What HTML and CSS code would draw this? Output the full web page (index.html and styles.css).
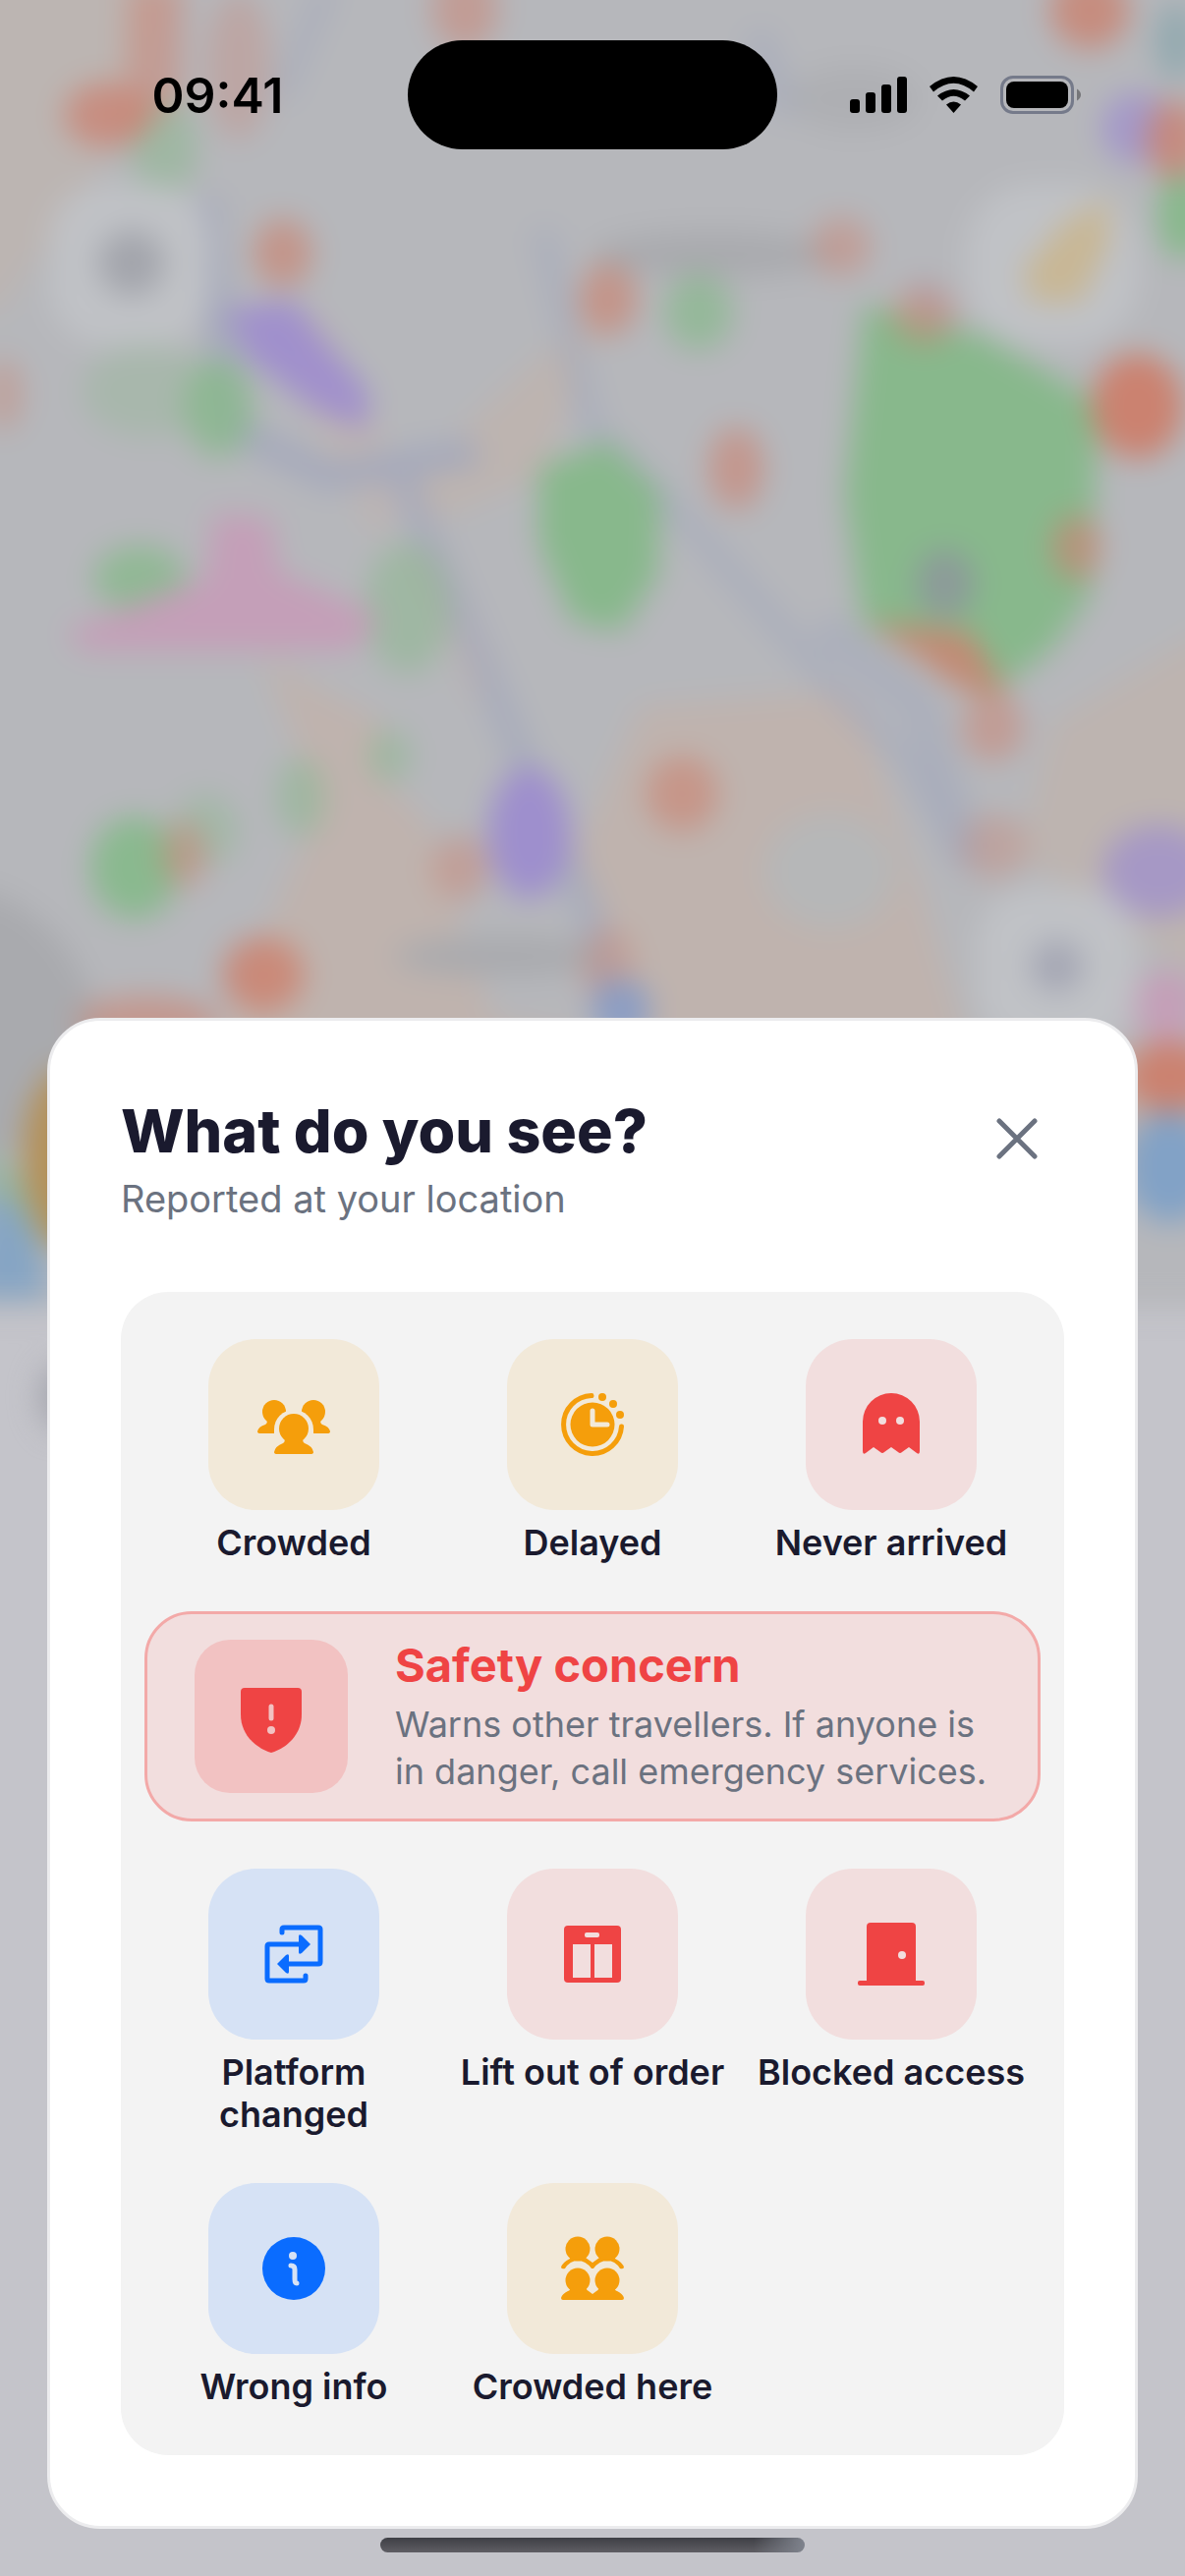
FILE: index.html
```html
<!DOCTYPE html>
<html lang="en">
<head>
  <meta charset="UTF-8">
  <meta name="viewport" content="width=device-width, initial-scale=1">
  <title>What do you see?</title>
  <link rel="stylesheet" href="styles.css">
</head>
<body>
  <!-- Blurred map behind the sheet -->
  <svg class="map" viewBox="0 0 721 1568" preserveAspectRatio="xMidYMin slice" aria-hidden="true">
    <defs>
      <filter id="soft" x="-10%" y="-10%" width="120%" height="120%" color-interpolation-filters="sRGB">
        <feGaussianBlur stdDeviation="9"/>
      </filter>
    </defs>
    <rect width="721" height="1568" fill="#c4c4ca"/>
    <g filter="url(#soft)">
      <rect x="-40" y="-40" width="801" height="836" fill="#b6b7bb"/>

      <!-- Built-up areas -->
      <g fill="#bfb3ae">
        <path d="M-20-20H110L70 90L0 190H-20Z" opacity=".7"/>
        <path d="M250 290L370 180L330 290L255 320Z" opacity=".8"/>
        <path d="M190 180L250 300L230 330L180 240Z" opacity=".6"/>
        <path d="M260 500L300 620L410 640H760V720H60L130 640L190 500L180 430L230 470Z"/>
        <path d="M390 430L520 420L560 540L590 640H400L350 520Z"/>
        <path d="M640 440L740 380V600L620 520Z" opacity=".8"/>
        <path d="M265 320L300 400L290 430L250 340Z"/>
        <path d="M160 400L235 440L215 530L190 480Z"/>
      </g>
      <ellipse cx="505" cy="530" rx="40" ry="35" fill="#b6b7b8"/>
      <path d="M-20 540Q40 550 60 620V700H-20Z" fill="#a9aaae"/>

      <!-- Water and rail lines -->
      <g fill="none" stroke="#a5a9bb" stroke-width="17">
        <path d="M125 120L140 260L200 290L290 275"/>
        <path d="M240 280L300 420L360 560L380 640" opacity=".8"/>
        <path d="M330 140L360 260L420 320L500 410L550 460L590 530" stroke-width="14" opacity=".7"/>
        <path d="M500 380L560 430L590 520" stroke-width="20" opacity=".7"/>
        <path d="M560 170L600 260" stroke-width="10"/>
        <path d="M200-10L170 60" stroke-width="12" opacity=".7"/>
        <path d="M460 20L480 70" stroke-width="16" opacity=".7"/>
      </g>
      <g fill="#a9aaae">
        <ellipse cx="435" cy="155" rx="75" ry="14"/>
        <ellipse cx="520" cy="60" rx="40" ry="20" opacity=".6"/>
        <ellipse cx="305" cy="582" rx="65" ry="12"/>
      </g>

      <!-- Parks -->
      <g fill="#88b88c">
        <path d="M526 185L600 205L668 245L664 360L640 395L600 425L525 380L514 300Z"/>
        <path d="M328 285L370 268L402 300L400 350L378 384L348 378L328 330Z"/>
        <ellipse cx="85" cy="352" rx="28" ry="20" opacity=".8"/>
        <ellipse cx="133" cy="248" rx="21" ry="30" opacity=".8"/>
        <ellipse cx="90" cy="238" rx="40" ry="28" opacity=".3"/>
        <ellipse cx="425" cy="190" rx="21" ry="23" opacity=".7"/>
        <ellipse cx="248" cy="370" rx="26" ry="40" opacity=".5"/>
        <ellipse cx="82" cy="528" rx="27" ry="31" opacity=".95"/>
        <ellipse cx="125" cy="505" rx="20" ry="22" opacity=".4"/>
        <ellipse cx="183" cy="485" rx="15" ry="24" opacity=".5"/>
        <ellipse cx="237" cy="460" rx="13" ry="16" opacity=".5"/>
        <ellipse cx="100" cy="90" rx="20" ry="30" opacity=".5"/>
        <ellipse cx="720" cy="130" rx="16" ry="28"/>
      </g>
      <ellipse cx="575" cy="355" rx="18" ry="21" fill="#8c9b99"/>

      <!-- Pink and purple districts -->
      <path d="M40 384L125 352L130 312L165 315L170 348L232 375L215 396H50Z" fill="#c49fb8"/>
      <g fill="#9d8cce">
        <path d="M138 188L178 182L225 240L222 262L190 248L150 218Z" opacity=".9"/>
        <ellipse cx="322" cy="507" rx="25" ry="40" opacity=".95"/>
        <ellipse cx="705" cy="530" rx="34" ry="28" opacity=".7"/>
        <ellipse cx="692" cy="78" rx="22" ry="22" opacity=".7"/>
      </g>

      <!-- Stations -->
      <g fill="#cb8270">
        <ellipse cx="65" cy="70" rx="26" ry="20" opacity=".75"/>
        <path d="M78-10L112-10L110 60L75 90Z" opacity=".5"/>
        <ellipse cx="145" cy="40" rx="20" ry="45" opacity=".3"/>
        <ellipse cx="283" cy="5" rx="20" ry="26" opacity=".5"/>
        <ellipse cx="663" cy="6" rx="24" ry="24" opacity=".8"/>
        <ellipse cx="715" cy="85" rx="18" ry="24" opacity=".8"/>
        <ellipse cx="172" cy="154" rx="18" ry="21" opacity=".65"/>
        <ellipse cx="370" cy="182" rx="18" ry="22" opacity=".65"/>
        <ellipse cx="512" cy="150" rx="18" ry="18" opacity=".45"/>
        <ellipse cx="562" cy="192" rx="19" ry="18" opacity=".5"/>
        <ellipse cx="448" cy="285" rx="17" ry="25" opacity=".6"/>
        <ellipse cx="692" cy="247" rx="28" ry="32"/>
        <ellipse cx="655" cy="333" rx="15" ry="20" opacity=".65"/>
        <path d="M528 378L590 384L614 425L585 420Z" opacity=".85"/>
        <ellipse cx="604" cy="443" rx="19" ry="20" opacity=".5"/>
        <ellipse cx="415" cy="483" rx="22" ry="23" opacity=".6"/>
        <ellipse cx="605" cy="515" rx="20" ry="20" opacity=".35"/>
        <ellipse cx="112" cy="520" rx="14" ry="20" opacity=".5"/>
        <ellipse cx="280" cy="528" rx="17" ry="20" opacity=".45"/>
        <ellipse cx="160" cy="593" rx="25" ry="23" opacity=".85"/>
        <ellipse cx="370" cy="590" rx="16" ry="26" opacity=".4"/>
        <ellipse cx="90" cy="622" rx="44" ry="16" opacity=".6"/>
        <ellipse cx="2" cy="240" rx="12" ry="22" opacity=".4"/>
        <ellipse cx="712" cy="655" rx="28" ry="22"/>
      </g>
      <ellipse cx="710" cy="612" rx="20" ry="22" fill="#c49fb8"/>
      <ellipse cx="378" cy="614" rx="18" ry="18" fill="#8b9dc4"/>
      <ellipse cx="712" cy="710" rx="28" ry="34" fill="#82a2c6"/>
      <ellipse cx="716" cy="25" rx="14" ry="24" fill="#94aab0"/>

      <!-- Large marker peeking out on the left -->
      <ellipse cx="40" cy="705" rx="26" ry="55" fill="#b49159"/>
      <path d="M-10 720L20 735L30 790H-20Z" fill="#86a5c4"/>
      <path d="M-10 695L12 715L30 765L10 735L-10 725Z" fill="#96b3a0"/>
      <ellipse cx="38" cy="850" rx="14" ry="20" fill="#a5a6ae"/>

      <!-- Floating map controls -->
      <g fill="#c0c2c6">
        <rect x="30" y="112" width="98" height="98" rx="34"/>
        <rect x="588" y="112" width="105" height="98" rx="40"/>
        <rect x="594" y="540" width="98" height="98" rx="34"/>
      </g>
      <circle cx="80" cy="160" r="20" fill="#a3a5ac"/>
      <circle cx="643" cy="588" r="16" fill="#a5a7b4"/>
      <path d="M622 165L648 135L675 120L674 150L657 184H628Z" fill="#c8b795"/>
    </g>
  </svg>

  <div class="screen">
    <header class="status-bar">
      <time class="status-time">09:41</time>
      <div class="island"></div>
      <div class="status-icons">
        <svg width="58" height="39" viewBox="0 0 58 39" role="img" aria-label="Signal">
          <rect x="0" y="24" width="10" height="14" rx="3"/>
          <rect x="16" y="17" width="10" height="21" rx="3"/>
          <rect x="32" y="9" width="10" height="29" rx="3"/>
          <rect x="48" y="1" width="10" height="37" rx="3"/>
        </svg>
        <svg width="51" height="39" viewBox="0 0 51 39" role="img" aria-label="Wi-Fi">
          <path d="M1 11Q25.500-9 50 11L46 16.500Q25.500-1 5 16.500Z"/>
          <path d="M9 20.500Q25.500 7.500 42 20.500L37 25.500Q25.500 16 14 25.500Z"/>
          <path d="M18 29.500Q25.500 23.500 33 29.500L25.500 38Z"/>
        </svg>
        <svg width="82" height="39" viewBox="0 0 82 39" role="img" aria-label="Battery">
          <rect x="1.500" y="1.500" width="72" height="36" rx="11.500" fill="none" stroke="#757a8a" stroke-width="3"/>
          <rect x="6" y="6" width="63" height="27" rx="8"/>
          <path d="M78 13.500Q82 16 82 19.500T78 25.500Z" fill="#757679"/>
        </svg>
      </div>
    </header>

    <main class="sheet">
      <div class="sheet-header">
        <div>
          <h1>What do you see?</h1>
          <p class="subtitle">Reported at your location</p>
        </div>
        <button class="close-btn" type="button" aria-label="Close">
          <svg width="48" height="48" viewBox="0 0 48 48">
            <path d="M6 6L42 42M42 6L6 42" fill="none" stroke="#6b7280" stroke-width="5" stroke-linecap="round"/>
          </svg>
        </button>
      </div>

      <div class="report-grid">
        <button class="report amber" type="button">
          <span class="tile">
            <svg class="icon" viewBox="-40 -40 80 80">
              <circle cx="-20" cy="-13" r="12"/>
              <circle cx="20" cy="-13" r="12"/>
              <path d="M-28-5Q-26-2-29 0Q-36 2-37 7Q-37 9-34 9H-10V-5Z"/>
              <path d="M28-5Q26-2 29 0Q36 2 37 7Q37 9 34 9H10V-5Z"/>
              <circle class="cut" cx="0" cy="5" r="20"/>
              <path class="cut" d="M-20 5V14H20V5Z"/>
              <circle cx="0" cy="4" r="15"/>
              <path d="M-10 13Q-8 17-11 19Q-19 22-20 28Q-20 30-17 30H17Q20 30 20 28Q19 22 11 19Q8 17 10 13Z"/>
            </svg>
          </span>
          <span class="label">Crowded</span>
        </button>
        <button class="report amber" type="button">
          <span class="tile">
            <svg class="icon" viewBox="-40 -40 80 80">
              <path class="line" d="M-1-29.500A29.500 29.500 0 1 0 29.500 2"/>
              <circle cx="10" cy="-28" r="4"/>
              <circle cx="21" cy="-21" r="4"/>
              <circle cx="28" cy="-10" r="4"/>
              <circle cx="0" cy="0" r="22.500"/>
              <path class="cut-line" d="M0-14V0H15"/>
            </svg>
          </span>
          <span class="label">Delayed</span>
        </button>
        <button class="report red" type="button">
          <span class="tile">
            <svg class="icon" viewBox="-40 -40 80 80">
              <path d="M-29-3A29 29 0 0 1 29-3V27Q29 31 26 29L18 23L11 28Q9 30 7 28L0 23L-7 28Q-9 30-11 28L-18 23L-26 29Q-29 31-29 27Z"/>
              <circle class="cut" cx="-9" cy="-4" r="4"/>
              <circle class="cut" cx="9" cy="-4" r="4"/>
            </svg>
          </span>
          <span class="label">Never arrived</span>
        </button>

        <button class="safety" type="button">
          <span class="safety-tile">
            <svg class="icon" viewBox="-40 -40 80 80">
              <path d="M-27-29H27Q31-29 31-25V-2C31 20 14 33 0 37C-14 33-31 20-31-2V-25Q-31-29-27-29Z"/>
              <path class="cut-line" d="M0-10V2"/>
              <circle class="cut" cx="0" cy="14" r="4"/>
            </svg>
          </span>
          <span class="safety-text">
            <strong>Safety concern</strong>
            <span>Warns other travellers. If anyone is in danger, call emergency services.</span>
          </span>
        </button>

        <button class="report blue" type="button">
          <span class="tile">
            <svg class="icon" viewBox="-40 -40 80 80">
              <path class="line" d="M-12-22V-25Q-12-27-10-27H25Q27-27 27-25V8Q27 10 25 10H-10"/>
              <path class="line" d="M12 22V25Q12 27 10 27H-25Q-27 27-27 25V-8Q-27-10-25-10H10"/>
              <path d="M-17 10L-8 1Q-5-1-5 2V18Q-5 21-8 19Z"/>
              <path d="M17-10L8-1Q5 1 5-2V-18Q5-21 8-19Z"/>
            </svg>
          </span>
          <span class="label">Platform changed</span>
        </button>
        <button class="report red" type="button">
          <span class="tile">
            <svg class="icon" viewBox="-40 -40 80 80">
              <rect x="-29" y="-29" width="58" height="58" rx="4"/>
              <rect class="cut" x="-8" y="-22" width="15" height="5" rx="2"/>
              <rect class="cut" x="-20" y="-10" width="18" height="34"/>
              <rect class="cut" x="2" y="-10" width="18" height="34"/>
            </svg>
          </span>
          <span class="label">Lift out of order</span>
        </button>
        <button class="report red" type="button">
          <span class="tile">
            <svg class="icon" viewBox="-40 -40 80 80">
              <path d="M-25 28V-28Q-25-32-21-32H21Q25-32 25-28V28Z"/>
              <rect x="-34" y="27" width="68" height="5" rx="2"/>
              <circle class="cut" cx="11" cy="1" r="4"/>
            </svg>
          </span>
          <span class="label">Blocked access</span>
        </button>

        <button class="report blue" type="button">
          <span class="tile">
            <svg class="icon" viewBox="-40 -40 80 80">
              <circle cx="0" cy="0" r="32"/>
              <circle class="cut" cx="-1" cy="-13" r="4"/>
              <path class="cut-line" d="M-3-3Q1-3 1 1V11Q1 15 3 15"/>
            </svg>
          </span>
          <span class="label">Wrong info</span>
        </button>
        <button class="report amber" type="button">
          <span class="tile">
            <svg class="icon" viewBox="-40 -40 80 80">
              <circle cx="-15" cy="-20" r="12.500"/>
              <circle cx="15" cy="-20" r="12.500"/>
              <path d="M-32-1Q-31-6-23-10L-22-14H-7L-7-11L0-6L7-11L7-14H22L23-10Q31-6 32-1Q31 1 28 0Q23-8 15-8Q7-8 1 0H-1Q-7-8-15-8Q-23-8-28 0Q-31 1-32-1Z"/>
              <circle cx="-15" cy="12" r="12.500"/>
              <circle cx="15" cy="12" r="12.500"/>
              <path d="M-23 19Q-22 22-25 23Q-31 26-32 30Q-32 32-30 32H30Q32 32 32 30Q31 26 25 23Q22 22 23 19H7Q6 22 4 23L0 26L-4 23Q-6 22-7 19Z"/>
            </svg>
          </span>
          <span class="label">Crowded here</span>
        </button>
      </div>
    </main>

    <div class="home-indicator"></div>
  </div>
</body>
</html>
```
FILE: styles.css
```css
* {
  box-sizing: border-box;
  margin: 0;
  padding: 0;
}

body {
  font-family: Inter, "Liberation Sans", sans-serif;
  background: #c4c4ca;
  color: #1a1a2e;
  position: relative;
}

button {
  font: inherit;
  color: inherit;
  background: none;
  border: none;
  cursor: pointer;
}

/* Map backdrop */
.map {
  position: absolute;
  inset: 0;
  width: 100%;
  height: 100%;
}

.screen {
  position: relative;
  min-height: 100vh;
  padding: 41px 48px 24px;
  display: flex;
  flex-direction: column;
}

/* Status bar */
.status-bar {
  display: grid;
  grid-template-columns: 1fr 376px 1fr;
  align-items: center;
}

.status-time {
  padding-right: 20px;
  font-size: 50px;
  font-weight: 600;
  line-height: 60px;
  text-align: center;
  color: #000000;
}

.island {
  height: 111px;
  border-radius: 56px;
  background: #000000;
}

.status-icons {
  display: flex;
  justify-content: center;
  gap: 22px;
  padding-left: 16px;
}

/* Sheet */
.sheet {
  margin-top: auto;
  padding: 72px;
  background: #ffffff;
  border: 3px solid #ececee;
  border-radius: 54px;
}

.sheet-header {
  display: flex;
  justify-content: space-between;
  align-items: flex-start;
  margin-bottom: 66px;
}

.sheet-header h1 {
  font-size: 61px;
  font-weight: 800;
  line-height: 80px;
}

.subtitle {
  font-size: 38px;
  line-height: 58px;
  color: #6b7280;
}

.close-btn {
  display: flex;
  padding: 24px;
}

/* Report options */
.report-grid {
  display: grid;
  grid-template-columns: repeat(3, 1fr);
  align-items: start;
  row-gap: 48px;
  padding: 48px 24px;
  background: #f3f3f3;
  border-radius: 48px;
}

.report {
  display: flex;
  flex-direction: column;
  align-items: center;
  gap: 12px;
}

.tile,
.safety-tile {
  display: flex;
  align-items: center;
  justify-content: center;
  flex-shrink: 0;
  background: var(--tile);
}

.tile {
  width: 174px;
  height: 174px;
  border-radius: 48px;
}

.label {
  padding: 0 12px;
  font-size: 36px;
  font-weight: 600;
  line-height: 43px;
}

.amber {
  --accent: #f59e0b;
  --tile: #f2e9d9;
}

.red {
  --accent: #ef4444;
  --tile: #f2dede;
}

.blue {
  --accent: #0a6cff;
  --tile: #d6e2f5;
}

/* Icons */
.icon {
  width: 80px;
  height: 80px;
  fill: var(--accent);
}

.icon .line {
  fill: none;
  stroke: var(--accent);
  stroke-width: 5;
  stroke-linecap: round;
}

.icon .cut {
  fill: var(--tile);
}

.icon .cut-line {
  fill: none;
  stroke: var(--tile);
  stroke-width: 5;
  stroke-linecap: round;
  stroke-linejoin: round;
}

/* Safety card */
.safety {
  --accent: #ef4444;
  --tile: #f2c2c2;
  grid-column: 1 / -1;
  display: flex;
  align-items: center;
  gap: 48px;
  padding: 24px 48px;
  background: #f2dede;
  border: 3px solid #f3a9a8;
  border-radius: 48px;
  text-align: left;
}

.safety-tile {
  width: 156px;
  height: 156px;
  border-radius: 36px;
}

.safety-text {
  font-size: 36px;
  line-height: 48px;
  color: #6b7280;
}

.safety-text strong {
  display: block;
  margin-bottom: 8px;
  font-size: 47px;
  font-weight: 700;
  line-height: 56px;
  color: #ef4444;
}

.home-indicator {
  width: 39%;
  height: 15px;
  margin: 9px auto 0;
  border-radius: 8px;
  background: linear-gradient(90deg, transparent 88%, #7f838d), linear-gradient(#3e3f45, #5f5e64);
}
```
